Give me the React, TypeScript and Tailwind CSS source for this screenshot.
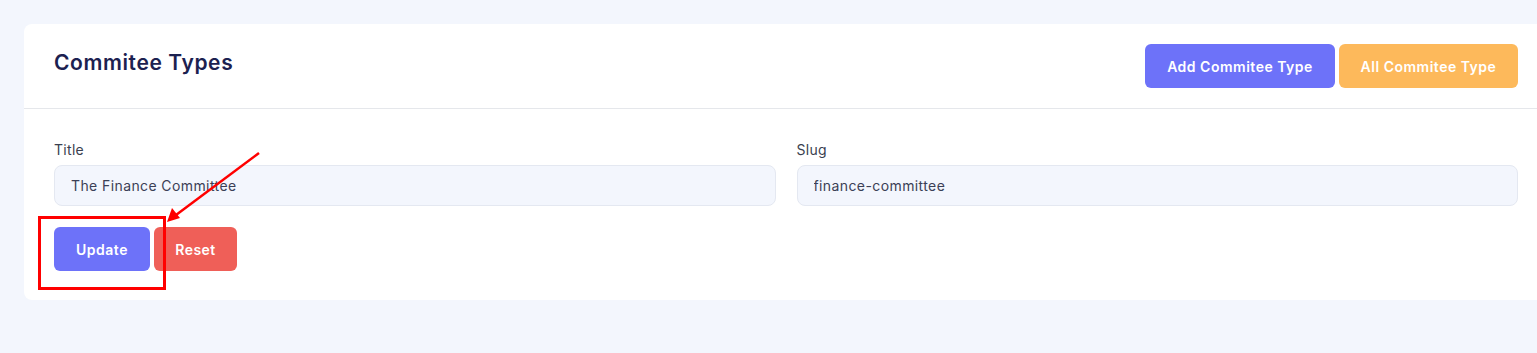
const fieldClass =
  "h-[41px] w-full rounded-lg border border-[#e4e8f1] bg-[#f3f6fd] px-4 text-[14px] tracking-[0.4px] text-[#3b4056] outline-none";

const Field = ({ label, value }: { label: string; value: string }) => {
  return (
    <div className="flex flex-col gap-[5px]">
      <label className="text-[14px] leading-[20px] tracking-[0.3px] text-[#3a3f50]">{label}</label>
      <input className={fieldClass} defaultValue={value} />
    </div>
  );
};

const Annotation = () => {
  return (
    <svg
      className="pointer-events-none absolute left-0 top-0"
      width="300"
      height="320"
      viewBox="0 0 300 320"
    >
      <rect x="39.5" y="217.5" width="125" height="71" fill="none" stroke="#ff0000" strokeWidth="3" />
      <line x1="259" y1="153" x2="176" y2="215" stroke="#ff0000" strokeWidth="2.5" />
      <polygon points="167,222 172,208 180,218" fill="#ff0000" />
    </svg>
  );
};

export default function App() {
  return (
    <div
      className="relative min-h-[353px] w-full overflow-hidden bg-[#f3f6fd] pt-6"
      style={{ fontFamily: "Inter, 'Noto Sans', sans-serif" }}
    >
      <div className="ml-6 w-[1524px] rounded-lg bg-white">
        <div className="flex h-[85px] items-center justify-between border-b border-[#e5e7eb] px-[30px]">
          <h1 className="mb-[7px] text-[21px] font-semibold tracking-[0.6px] text-[#1c2150]">
            Commitee Types
          </h1>
          <div className="flex gap-1">
            <button className="h-[44px] w-[190px] rounded-md bg-[#6d72f9] text-[14px] font-semibold tracking-[0.5px] text-white">
              Add Commitee Type
            </button>
            <button className="h-[44px] w-[179px] rounded-md bg-[#fdb95b] text-[14px] font-semibold tracking-[0.5px] text-white">
              All Commitee Type
            </button>
          </div>
        </div>
        <div className="px-[30px] pb-[29px] pt-[31px]">
          <div className="grid grid-cols-2 gap-[21px]">
            <Field label="Title" value="The Finance Committee" />
            <Field label="Slug" value="finance-committee" />
          </div>
          <div className="mt-[21px] flex gap-1">
            <button className="h-[44px] w-[96px] rounded-md bg-[#6d72f9] text-[14px] font-semibold tracking-[0.5px] text-white">
              Update
            </button>
            <button className="h-[44px] w-[83px] rounded-md bg-[#ef5f58] text-[14px] font-semibold tracking-[0.5px] text-white">
              Reset
            </button>
          </div>
        </div>
      </div>
      <Annotation />
    </div>
  );
}
